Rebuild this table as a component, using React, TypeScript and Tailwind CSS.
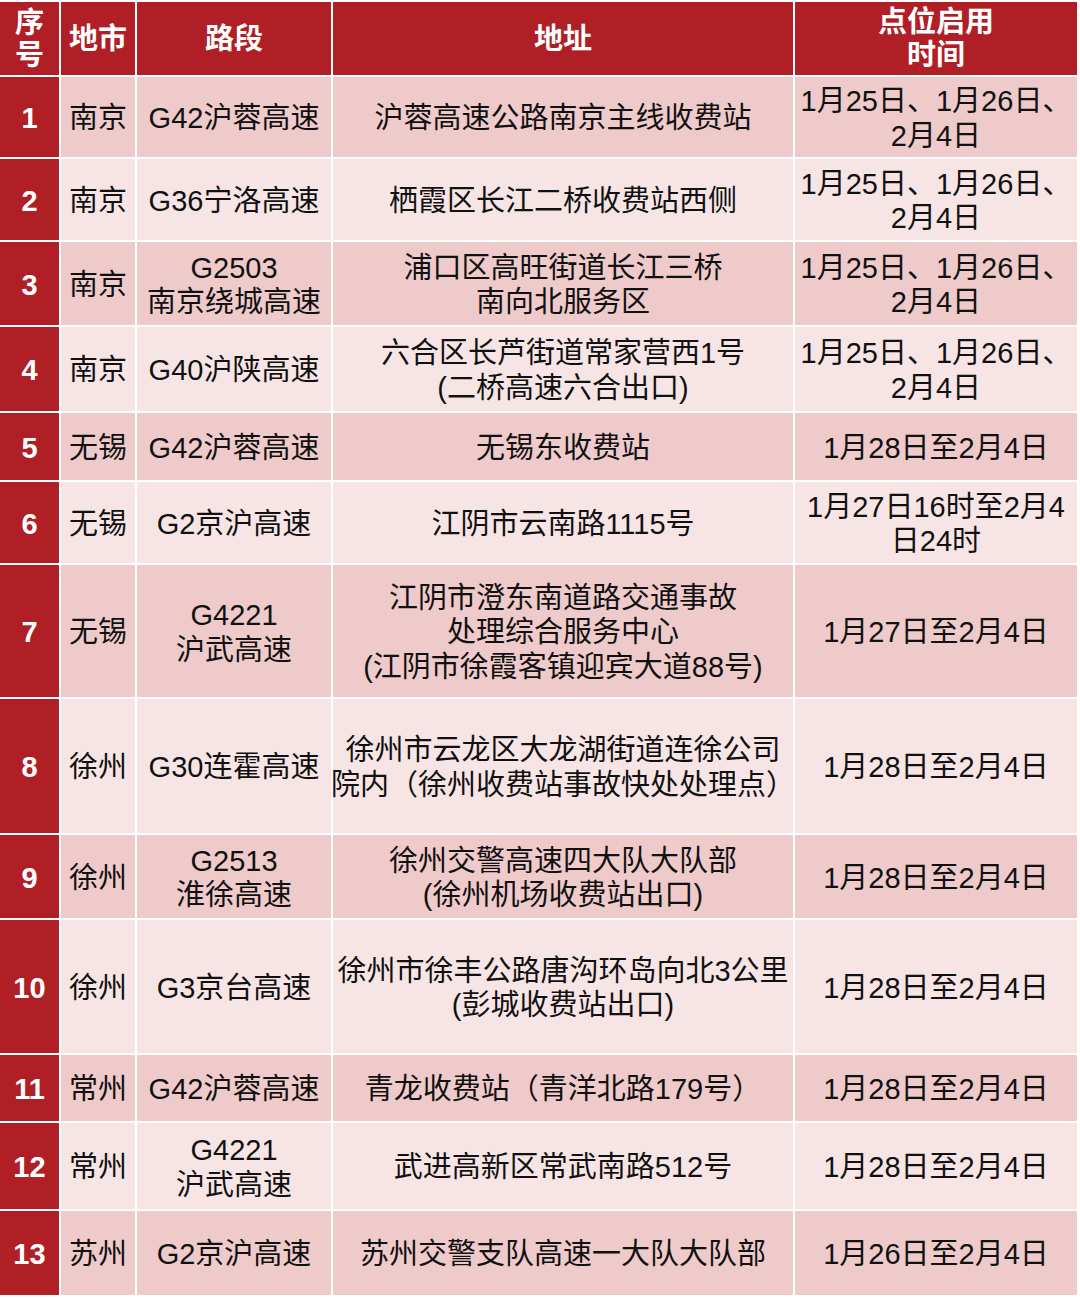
import React from "react";

type Row = {
  n: string;
  city: string;
  road: string[];
  addr: string[];
  time: string[];
  h: number;
};

const rows: Row[] = [
  { n: "1", city: "南京", road: ["G42沪蓉高速"], addr: ["沪蓉高速公路南京主线收费站"], time: ["1月25日、1月26日、", "2月4日"], h: 80 },
  { n: "2", city: "南京", road: ["G36宁洛高速"], addr: ["栖霞区长江二桥收费站西侧"], time: ["1月25日、1月26日、", "2月4日"], h: 81 },
  { n: "3", city: "南京", road: ["G2503", "南京绕城高速"], addr: ["浦口区高旺街道长江三桥", "南向北服务区"], time: ["1月25日、1月26日、", "2月4日"], h: 83 },
  { n: "4", city: "南京", road: ["G40沪陕高速"], addr: ["六合区长芦街道常家营西1号", "(二桥高速六合出口)"], time: ["1月25日、1月26日、", "2月4日"], h: 84 },
  { n: "5", city: "无锡", road: ["G42沪蓉高速"], addr: ["无锡东收费站"], time: ["1月28日至2月4日"], h: 67 },
  { n: "6", city: "无锡", road: ["G2京沪高速"], addr: ["江阴市云南路1115号"], time: ["1月27日16时至2月4", "日24时"], h: 81 },
  { n: "7", city: "无锡", road: ["G4221", "沪武高速"], addr: ["江阴市澄东南道路交通事故", "处理综合服务中心", "(江阴市徐霞客镇迎宾大道88号)"], time: ["1月27日至2月4日"], h: 132 },
  { n: "8", city: "徐州", road: ["G30连霍高速"], addr: ["徐州市云龙区大龙湖街道连徐公司", "院内（徐州收费站事故快处处理点）"], time: ["1月28日至2月4日"], h: 134 },
  { n: "9", city: "徐州", road: ["G2513", "淮徐高速"], addr: ["徐州交警高速四大队大队部", "(徐州机场收费站出口)"], time: ["1月28日至2月4日"], h: 83 },
  { n: "10", city: "徐州", road: ["G3京台高速"], addr: ["徐州市徐丰公路唐沟环岛向北3公里", "(彭城收费站出口)"], time: ["1月28日至2月4日"], h: 133 },
  { n: "11", city: "常州", road: ["G42沪蓉高速"], addr: ["青龙收费站（青洋北路179号）"], time: ["1月28日至2月4日"], h: 66 },
  { n: "12", city: "常州", road: ["G4221", "沪武高速"], addr: ["武进高新区常武南路512号"], time: ["1月28日至2月4日"], h: 86 },
  { n: "13", city: "苏州", road: ["G2京沪高速"], addr: ["苏州交警支队高速一大队大队部"], time: ["1月26日至2月4日"], h: 84 },
];

function Lines({ lines }: { lines: string[] }) {
  return (
    <div className="flex flex-col items-center">
      {lines.map((l, i) => (
        <span key={i} className="whitespace-nowrap">
          {l}
        </span>
      ))}
    </div>
  );
}

export default function App() {
  return (
    <div
      className="w-[1080px] h-[1298px] bg-white pt-[2px] overflow-hidden"
      style={{ fontFamily: '"Liberation Sans", "Noto Sans CJK SC", sans-serif' }}
    >
      <div className="w-[1077px] flex flex-col gap-[2px] bg-white text-[29px] leading-[34.5px]">
        {/* header */}
        <div className="flex gap-[2px] h-[73px] bg-white font-bold text-white leading-[32px]">
          <div className="w-[59px] shrink-0 bg-[#b01f25] flex flex-col items-center justify-center">
            <span>序</span>
            <span>号</span>
          </div>
          <div className="w-[74px] shrink-0 bg-[#b01f25] flex items-center justify-center">地市</div>
          <div className="w-[194px] shrink-0 bg-[#b01f25] flex items-center justify-center">路段</div>
          <div className="w-[460px] shrink-0 bg-[#b01f25] flex items-center justify-center">地址</div>
          <div className="w-[282px] shrink-0 bg-[#b01f25] flex flex-col items-center justify-center leading-[33px]">
            <span>点位启用</span>
            <span>时间</span>
          </div>
        </div>
        {rows.map((r, idx) => {
          const bg = idx % 2 === 0 ? "bg-[#efcacb]" : "bg-[#f7e5e6]";
          return (
            <div key={r.n} className="flex gap-[2px] bg-white text-[#111111]" style={{ height: r.h }}>
              <div className="w-[59px] shrink-0 bg-[#b01f25] flex items-center justify-center pt-[3px] font-bold text-white">
                {r.n}
              </div>
              <div className={`w-[74px] shrink-0 ${bg} flex items-center justify-center pt-[3px] whitespace-nowrap`}>
                {r.city}
              </div>
              <div className={`w-[194px] shrink-0 ${bg} flex items-center justify-center pt-[3px] text-center`}>
                <Lines lines={r.road} />
              </div>
              <div className={`w-[460px] shrink-0 ${bg} flex items-center justify-center pt-[3px] text-center`}>
                <Lines lines={r.addr} />
              </div>
              <div className={`w-[282px] shrink-0 ${bg} flex items-center justify-center pt-[3px] text-center`}>
                <Lines lines={r.time} />
              </div>
            </div>
          );
        })}
      </div>
    </div>
  );
}
